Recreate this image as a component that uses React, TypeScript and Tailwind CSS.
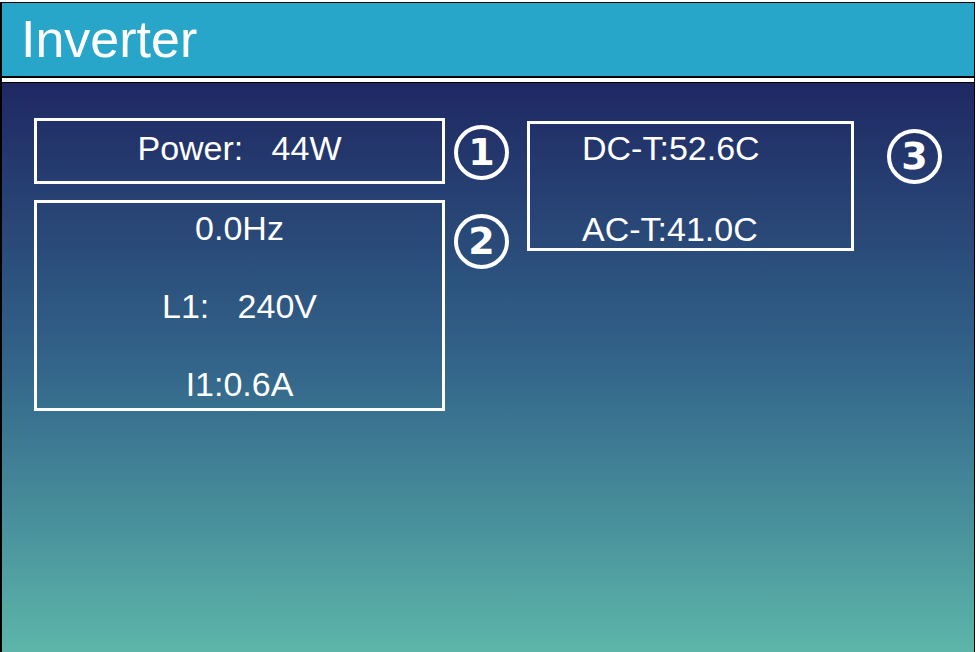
import React from 'react';

const sans = { fontFamily: '"Liberation Sans", Arial, sans-serif' };

function Badge({ n }: { n: string }) {
  return (
    <div className="w-[55px] h-[55px] rounded-full border-[4px] border-white flex items-center justify-center">
      <span className="text-white text-[38px] font-bold leading-none font-['DejaVu_Sans',sans-serif] -mt-[1px]">{n}</span>
    </div>
  );
}

export default function App() {
  return (
    <div className="w-[976px] h-[652px] bg-white pt-[2px] pr-[1px] overflow-hidden" style={sans}>
      <div className="h-full flex flex-col border-l-2 border-t border-r border-black">
        {/* title bar */}
        <div className="h-[75px] bg-[#27a6c9] flex items-center pl-[19px] border-b-2 border-black">
          <span className="text-white text-[52px] leading-none -mt-[1px]">Inverter</span>
        </div>
        <div className="h-[5px] bg-white border-b border-black" />

        {/* body */}
        <div className="flex-1 flex items-start pl-[32px] pt-[35px] bg-linear-to-b from-[#1f2863] via-[#33658a] to-[#5db6a9]">
          <div className="w-[411px] flex flex-col gap-[16px]">
            <div className="h-[66px] border-[3px] border-white flex justify-center pt-[7px]">
              <span className="text-white text-[34px] leading-[40px] whitespace-pre">Power:   44W</span>
            </div>
            <div className="h-[211px] border-[3px] border-white flex flex-col items-center pt-[5px] gap-[38px]">
              <span className="text-white text-[34px] leading-[40px] whitespace-pre">0.0Hz</span>
              <span className="text-white text-[34px] leading-[40px] whitespace-pre">L1:   240V</span>
              <span className="text-white text-[34px] leading-[40px] whitespace-pre">I1:0.6A</span>
            </div>
          </div>

          <div className="ml-[9px] mt-[7px] flex flex-col gap-[34px]">
            <Badge n="1" />
            <Badge n="2" />
          </div>

          <div className="ml-[18px] mt-[3px] w-[327px] h-[130px] border-[3px] border-white flex flex-col pl-[52px] pt-[4px] gap-[41px]">
            <span className="text-white text-[34px] leading-[40px]">DC-T:52.6C</span>
            <span className="text-white text-[34px] leading-[40px]">AC-T:41.0C</span>
          </div>

          <div className="ml-[33px] mt-[11px]">
            <Badge n="3" />
          </div>
        </div>
      </div>
    </div>
  );
}
